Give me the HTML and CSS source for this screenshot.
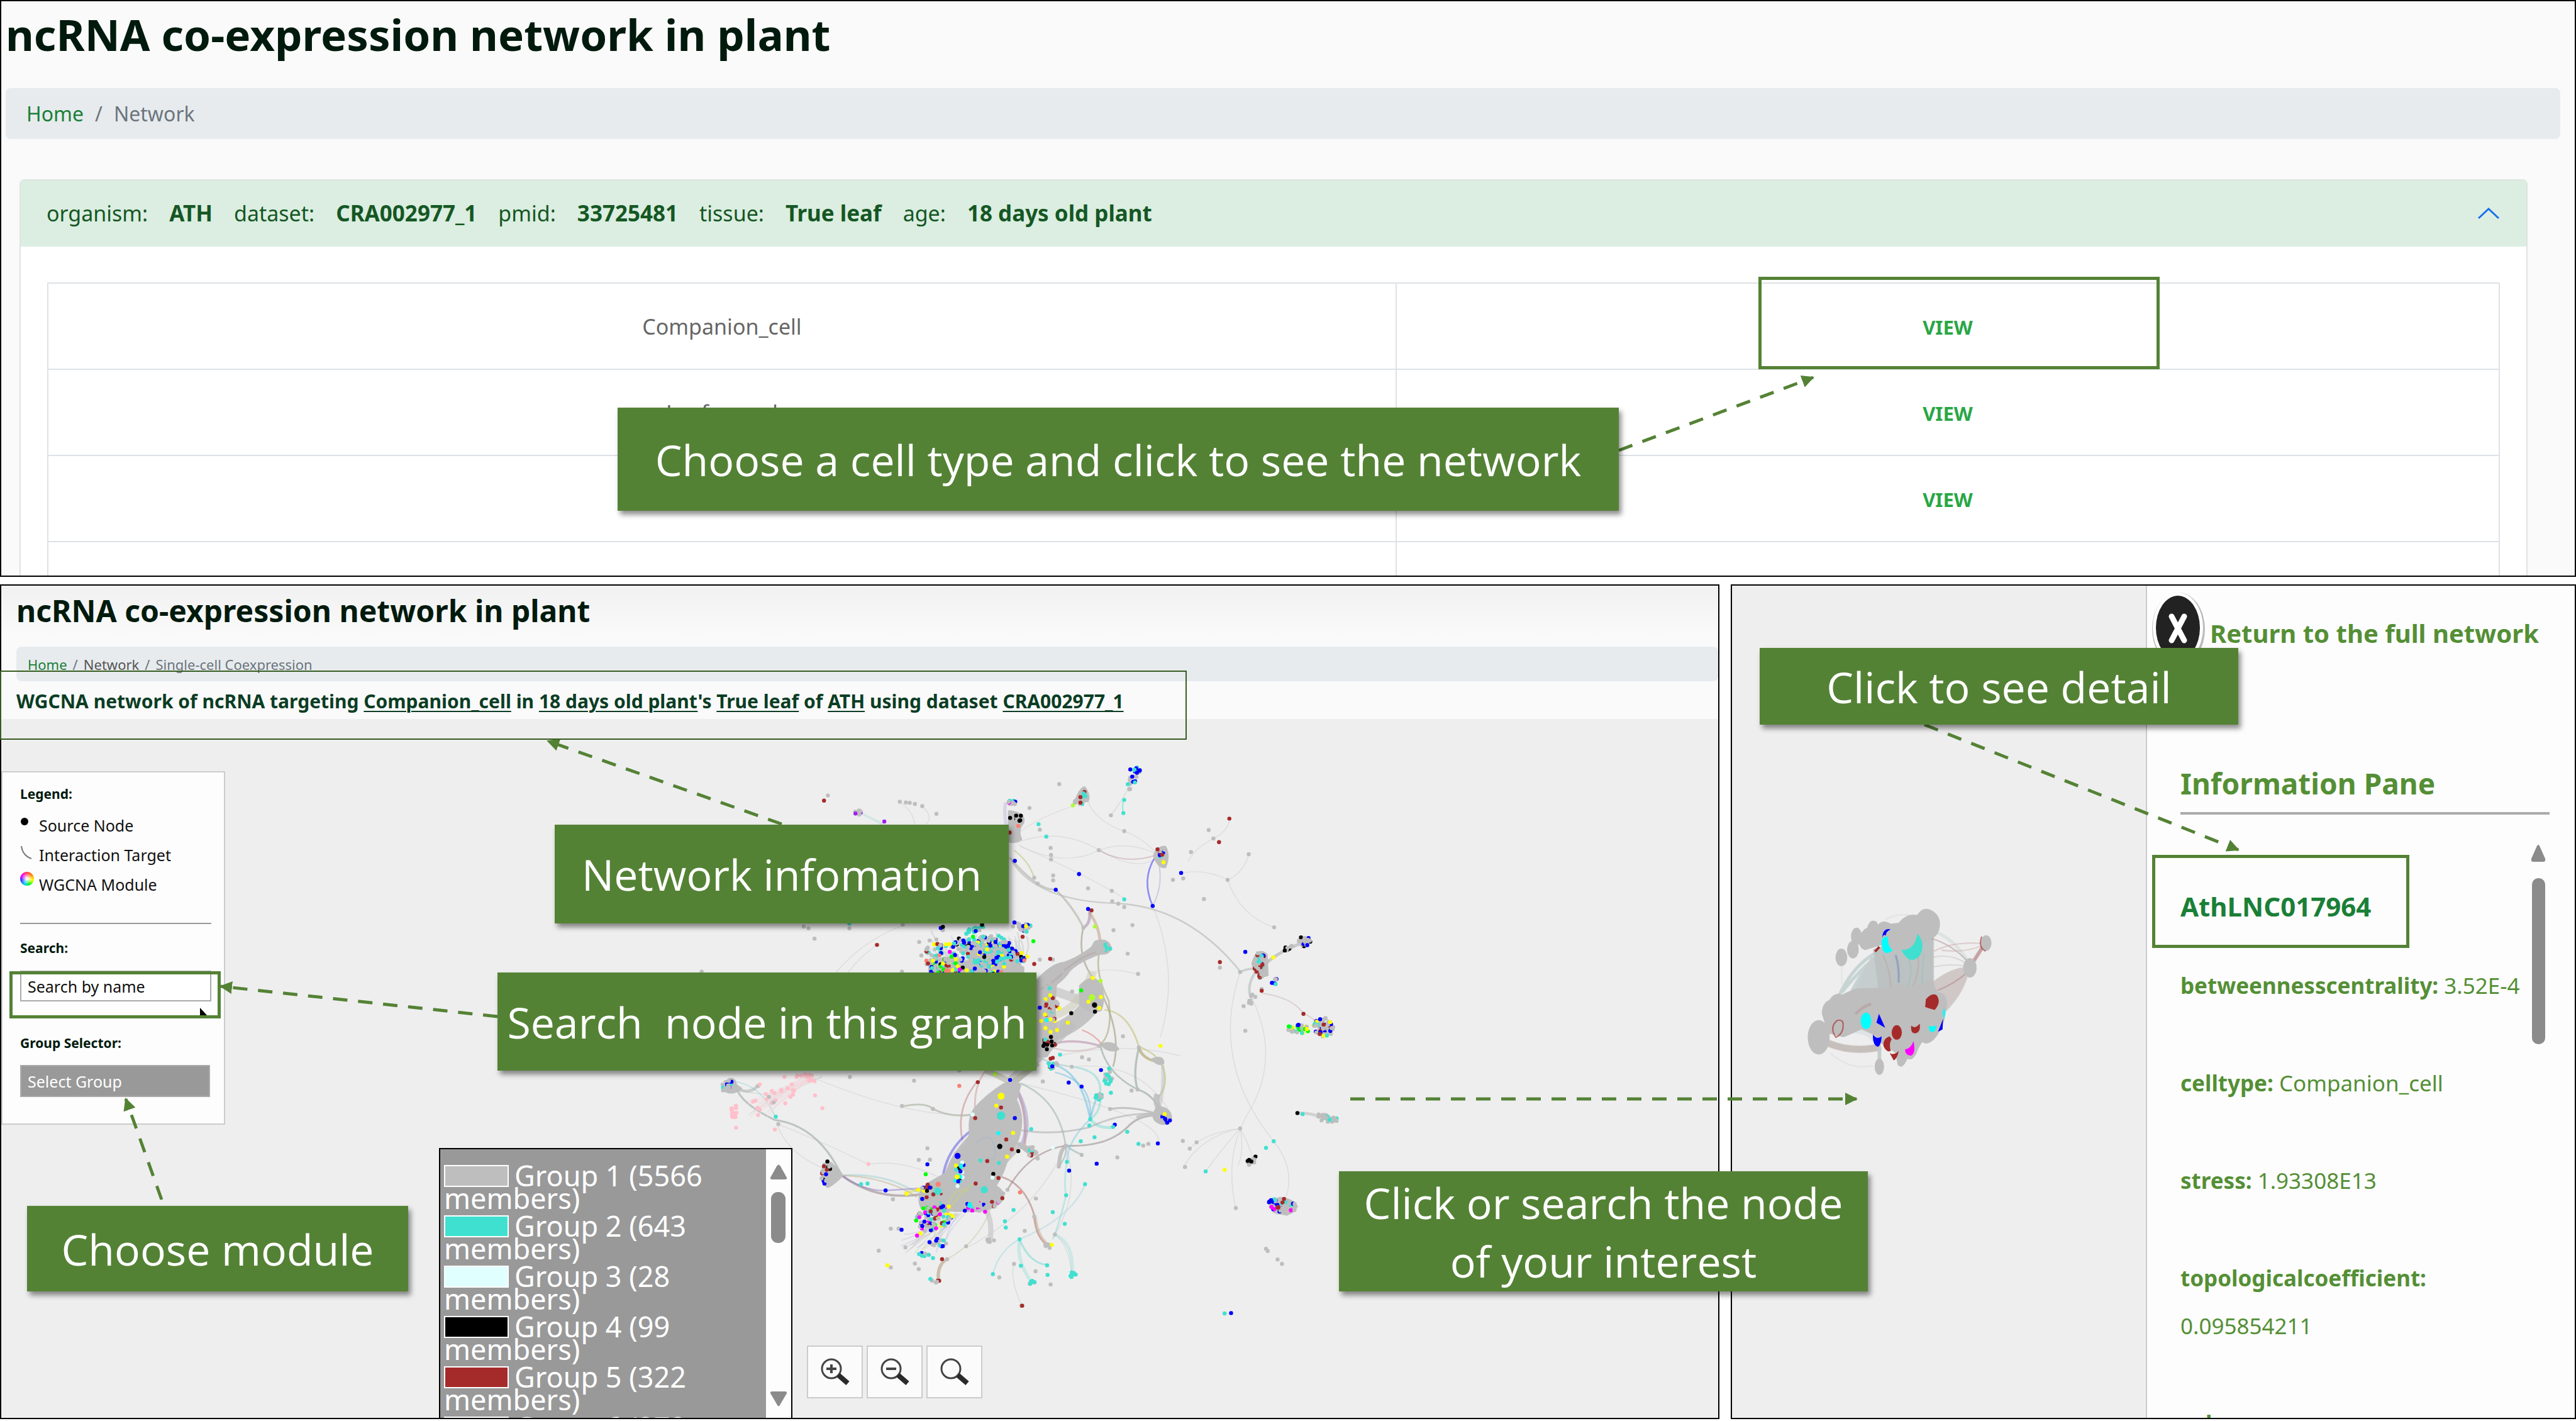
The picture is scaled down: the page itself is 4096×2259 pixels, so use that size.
FILE: index.html
```html
<!DOCTYPE html>
<html lang="en">
<head>
<meta charset="utf-8">
<title>ncRNA co-expression network in plant</title>
<link rel="stylesheet" href="styles.css">
</head>
<body>
<main class="guide">

  <section class="panel browse">
    <h1 class="browse-title">ncRNA co-expression network in plant</h1>
    <nav class="crumbs"><a href="#home">Home</a><span>/</span><span>Network</span></nav>
    <div class="accordion">
      <header class="accordion-head">
        <dl class="meta">
          <dt>organism:</dt><dd>ATH</dd>
          <dt>dataset:</dt><dd>CRA002977_1</dd>
          <dt>pmid:</dt><dd>33725481</dd>
          <dt>tissue:</dt><dd>True leaf</dd>
          <dt>age:</dt><dd>18 days old plant</dd>
        </dl>
        <button class="collapse" aria-label="Collapse"><svg width="36" height="20" viewBox="0 0 36 20"><path d="M2 18 18 3 34 18" fill="none" stroke="#1a6ff0" stroke-width="3"/></svg></button>
      </header>
      <table class="cells">
        <tbody>
          <tr><td>Companion_cell</td><td><a href="#view1">VIEW</a></td></tr>
          <tr><td>Leaf_guard</td><td><a href="#view2">VIEW</a></td></tr>
          <tr><td></td><td><a href="#view3">VIEW</a></td></tr>
          <tr><td></td><td></td></tr>
        </tbody>
      </table>
    </div>
  </section>

  <div class="details">
    <section class="panel network">
      <header class="network-head">
        <h2 class="network-title">ncRNA co-expression network in plant</h2>
        <nav class="crumbs crumbs-small"><a href="#home">Home</a><span>/</span><a class="plain" href="#network">Network</a><span>/</span><span>Single-cell Coexpression</span></nav>
        <p class="summary">WGCNA network of ncRNA targeting <u>Companion_cell</u> in <u>18 days old plant</u>'s <u>True leaf</u> of <u>ATH</u> using dataset <u>CRA002977_1</u></p>
      </header>
      <div class="canvas">
        <svg class="graph" id="graph" viewBox="0 0 1568 1568" preserveAspectRatio="none"></svg>

        <form class="sidebar">
          <h3>Legend:</h3>
          <ul class="legend">
            <li><svg width="26" height="30" viewBox="0 0 26 30"><circle cx="7" cy="8" r="6"/></svg>Source Node</li>
            <li><svg width="26" height="30" viewBox="0 0 26 30"><path d="M2 0Q4 15 18 20" fill="none" stroke="#777" stroke-width="2"/></svg>Interaction Target</li>
            <li><span class="wheel"></span>WGCNA Module</li>
          </ul>
          <hr>
          <label for="search">Search:</label>
          <input id="search" class="search" type="text" value="Search by name">
          <label class="group-label" for="group">Group Selector:</label>
          <select id="group" class="group"><option>Select Group</option></select>
        </form>

        <div class="dropdown">
          <ul class="groups">
            <li><span class="swatch silver"></span>Group 1 (5566 members)</li>
            <li><span class="swatch turquoise"></span>Group 2 (643 members)</li>
            <li><span class="swatch cyan"></span>Group 3 (28 members)</li>
            <li><span class="swatch black"></span>Group 4 (99 members)</li>
            <li><span class="swatch brown"></span>Group 5 (322 members)</li>
            <li><span class="swatch silver"></span>Group 6 (272 members)</li>
          </ul>
          <svg class="dropdown-bar" width="40" height="430" viewBox="0 0 40 430"><path d="M17 27 Q20 22 23 27 L33 45 Q34 48 30 48 H10 Q6 48 7 45Z"/><rect x="8" y="68" width="23" height="81" rx="11"/><path d="M17 405 Q20 412 23 405 L33 388 Q34 385 30 385 H10 Q6 385 7 388Z"/></svg>
        </div>

        <div class="zoom">
          <button aria-label="Zoom in"><svg width="48" height="44" viewBox="0 0 48 44"><circle cx="18" cy="17" r="15"/><path class="mark" d="M10 17H26M18 10V24"/><path class="handle" d="M29 27 44 40"/></svg></button>
          <button aria-label="Zoom out"><svg width="48" height="44" viewBox="0 0 48 44"><circle cx="18" cy="17" r="15"/><path class="mark" d="M10 17H26"/><path class="handle" d="M29 27 44 40"/></svg></button>
          <button aria-label="Fit"><svg width="48" height="44" viewBox="0 0 48 44"><circle cx="18" cy="17" r="15"/><path class="handle" d="M29 27 44 40"/></svg></button>
        </div>
      </div>
    </section>

    <section class="panel node">
      <div class="stage">
        <svg class="module" viewBox="0 0 1080 960">
          <defs><filter id="soft"><feGaussianBlur stdDeviation="2"/></filter></defs>
          <g fill="none" filter="url(#soft)">
            <path d="M400 280Q280 350 210 510M430 280Q330 360 270 500M470 250Q350 330 230 480" stroke="#b4c8c6" stroke-width="16" opacity=".7"/>
            <path d="M380 300Q330 380 290 480L480 500V300Z" fill="#c6cecd"/>
            <path d="M390 260 L420 490 H700 V190 L480 230Z" fill="#bcc2c1"/>
            <path d="M505 290Q525 350 520 430" stroke="#7f92c0" stroke-width="10" opacity=".7"/>
            <path d="M440 290Q480 370 480 460M620 290Q630 370 590 460" stroke="#b8a09c" stroke-width="6" opacity=".5"/>
            <path d="M570 300Q600 380 560 470M650 280Q640 380 640 440" stroke="#8fc0bc" stroke-width="5" opacity=".6"/>
            <path d="M700 170Q800 200 880 330" stroke="#cfdcdb" stroke-width="16" opacity=".6"/>
            <path d="M690 205Q800 240 870 320" stroke="#a88f94" stroke-width="6" opacity=".6"/>
            <path d="M700 300Q790 280 880 340M700 350Q790 330 880 350" stroke="#bcb6b2" stroke-width="5" opacity=".5"/>
            <path d="M700 270Q800 220 940 230M740 265Q860 280 950 240" stroke="#c9a6a6" stroke-width="6" opacity=".55"/>
            <path d="M690 430Q790 350 880 350L870 410Q840 500 760 580" fill="#c4bbb8" opacity=".75"/>
            <path d="M720 470Q800 440 870 380" stroke="#b07f80" stroke-width="6" opacity=".6"/>
            <path d="M885 350 965 225" stroke="#b98d8d" stroke-width="18" opacity=".8"/>
            <path d="M160 740Q280 790 430 760" stroke="#bdb3ae" stroke-width="36" opacity=".8"/>
            <path d="M230 690Q330 650 400 720" stroke="#dfe3e6" stroke-width="30"/>
            <path d="M422 760V860" stroke="#c3cbca" stroke-width="18"/>
            <path d="M170 790Q270 880 390 855M450 110Q520 70 600 90M230 300V440" stroke="#ddd" stroke-width="4"/>
          </g>
          <g fill="#bebebe">
            <ellipse cx="112" cy="710" rx="56" ry="88"/>
            <path d="M128 590Q128 535 165 520Q195 475 230 492L300 460 480 455Q520 420 560 455L640 440Q690 390 705 450L720 480Q765 480 768 540L755 620 725 690Q680 760 640 735L620 770Q600 835 565 820Q540 880 515 850L505 790 430 740 400 700 330 670 240 710 160 690Z"/>
            <ellipse cx="228" cy="302" rx="30" ry="45"/><ellipse cx="287" cy="262" rx="30" ry="45"/><ellipse cx="305" cy="195" rx="28" ry="45"/>
            <path d="M320 210Q330 160 360 150Q370 110 395 114Q410 115 415 135Q440 105 480 130L520 125Q560 75 615 85Q640 45 675 55Q730 75 732 130Q730 190 690 205L640 240 580 270 500 260 430 240 350 265Q310 250 320 210Z"/>
            <ellipse cx="885" cy="355" rx="34" ry="50"/><ellipse cx="968" cy="228" rx="27" ry="40"/><ellipse cx="422" cy="860" rx="24" ry="42"/>
          </g>
          <path d="M465 195Q425 195 435 250Q450 300 490 265Q465 250 465 195Z" fill="#0ff"/>
          <path d="M437 200Q440 150 480 158Q455 170 455 190Q445 180 437 200Z" fill="#00f"/>
          <path d="M617 180Q660 230 630 290Q580 350 533 262Q600 270 617 180Z" fill="#40e0d0"/>
          <path d="M400 272 422 248" stroke="#a52a2a" stroke-width="12"/>
          <g fill="#a52a2a"><path d="M660 515Q690 480 715 495Q740 530 705 570Q680 565 656 555Z"/><ellipse cx="511" cy="685" rx="26" ry="37"/><path d="M585 650Q605 670 628 640Q635 685 605 690Q580 690 585 650Z"/><path d="M475 705Q440 715 443 755Q460 790 480 780Q470 740 485 720ZM475 790Q495 805 522 780Q510 825 495 828Z"/></g>
          <path d="M945 195Q925 250 965 270M235 630Q245 690 200 710Q165 660 205 625Q230 615 238 640" fill="none" stroke="#a52a2a" stroke-width="7" opacity=".6"/>
          <path d="M300 590Q340 550 380 540" fill="none" stroke="#b08a88" stroke-width="14" opacity=".4"/>
          <g fill="#0ff"><ellipse cx="354" cy="626" rx="27" ry="42"/><path d="M675 650Q695 660 715 648Q710 685 690 684Q675 680 675 650ZM752 560Q765 580 752 615Q742 590 752 560Z"/></g>
          <g fill="#00f"><path d="M420 590 452 662 407 635ZM390 695Q410 725 434 705Q430 757 412 758Q385 745 390 695ZM748 615 745 670 722 682Z"/></g>
          <path d="M553 772Q580 770 597 730Q610 800 580 804Q553 800 553 772Z" fill="#f0f"/>
        </svg>
      </div>
      <aside class="pane">
        <a class="back" href="#full"><svg width="86" height="130" viewBox="0 0 86 130"><ellipse cx="44" cy="59" rx="42" ry="58" fill="#bbb"/><ellipse cx="43" cy="57" rx="40" ry="56" fill="#fff"/><ellipse cx="43" cy="57" rx="35" ry="51" fill="#222"/><path d="M33 39 53 77M53 39 33 77" stroke="#fff" stroke-width="9" stroke-linecap="round"/></svg>Return to the full network</a>
        <h2>Information Pane</h2>
        <hr>
        <div class="scroller">
          <div class="facts">
            <h3><a href="#AthLNC017964">AthLNC017964</a></h3>
            <p><b>betweennesscentrality:</b> 3.52E-4</p>
            <p><b>celltype:</b> Companion_cell</p>
            <p><b>stress:</b> 1.93308E13</p>
            <p><b>topologicalcoefficient:</b><br>0.095854211</p>
            <p><b>color:</b> gray</p>
          </div>
          <svg class="scrollbar" width="24" height="370" viewBox="0 0 24 370"><path d="M9 52Q12 44 15 52L23 70Q24 75 20 75H4Q0 75 1 70Z"/><rect x="2" y="101" width="21" height="264" rx="10"/></svg>
        </div>
      </aside>
    </section>
  </div>

  <svg class="arrows" viewBox="0 0 4096 2259">
    <defs><marker id="tip" viewBox="0 0 10 10" refX="9" refY="5" markerUnits="userSpaceOnUse" markerWidth="20" markerHeight="20" orient="auto"><path d="M0 0 10 5 0 10Z" fill="#548235"/></marker></defs>
    <g fill="none" stroke="#548235" stroke-width="5" stroke-dasharray="23 17" marker-end="url(#tip)">
      <path d="M2574 716 2883 600"/>
      <path d="M1243 1310 871 1178"/>
      <path d="M791 1616 351 1568"/>
      <path d="M257 1907 200 1747"/>
      <path d="M3060 1152 3559 1351"/>
      <path d="M2147 1747H2952"/>
    </g>
    <path d="M318 1602V1614H329Z"/>
  </svg>
  <div class="mark-box mark-view"></div>
  <div class="mark-box mark-summary"></div>
  <div class="mark-box mark-search"></div>
  <div class="mark-box mark-node"></div>
  <p class="callout c-cell">Choose a cell type and click to see the network</p>
  <p class="callout c-info">Network infomation</p>
  <p class="callout c-search">Search&nbsp; node in this graph</p>
  <p class="callout c-module">Choose module</p>
  <p class="callout c-node">Click or search the node<br>of your interest</p>
  <p class="callout c-detail">Click to see detail</p>
</main>
<script src="graph.js"></script>
</body>
</html>
```
FILE: styles.css
```css
* { box-sizing: border-box; }
body { margin: 0; background: #fff; font-family: "Noto Sans", sans-serif; color: #001a0d; }
h1, h2, h3, p, ul, dl, dd { margin: 0; padding: 0; }
ul { list-style: none; }
a { text-decoration: none; color: #1a7f37; }
hr { border: 0; margin: 0; }

.guide { position: relative; display: grid; grid-template-rows: 917fr 1327fr; gap: 12px; height: 100vh; padding-bottom: 3px; overflow: hidden; }
.panel { border: 2px solid #000; overflow: hidden; min-width: 0; min-height: 0; }

/* cell type list */
.browse { padding: 12px 23px 0 7px; background: #fafafa; }
.browse-title { font-size: 69px; line-height: 80px; }
.crumbs { display: flex; align-items: center; gap: 18px; height: 81px; margin-top: 46px; padding: 0 33px; border-radius: 8px; background: #e7ebee; color: #6c757d; font-size: 32px; }
.accordion { margin: 64px 52px 0 22px; border: 2px solid #dfe3e1; border-radius: 8px; background: #fff; }
.accordion-head { display: flex; align-items: center; justify-content: space-between; height: 105px; padding: 0 42px 2px 41px; background: #dbeee1; color: #155724; font-size: 34px; }
.meta { display: flex; align-items: baseline; gap: 34px; }
.meta dd { font-size: 35px; font-weight: 700; }
.collapse { border: 0; padding: 0; background: none; line-height: 0; }
.cells { width: calc(100% - 84px); margin: 57px 42px 0; border-collapse: collapse; table-layout: fixed; color: #666; font-size: 34px; text-align: center; }
.cells td { height: 137px; padding: 0; border: 2px solid #dee2e6; }
.cells td:first-child { width: 55%; }
.cells a { color: #28a745; font-weight: 700; font-size: 31px; }

/* lower row */
.details { display: grid; grid-template-columns: 2734fr 1344fr; gap: 18px; min-height: 0; }
.network { display: flex; flex-direction: column; }
.network-head { padding: 10px 0 0 24px; background: linear-gradient(#f1f1f1, #fafafa 80px); }
.network-title { font-size: 48px; line-height: 60px; }
.crumbs-small { gap: 9px; height: 55px; margin-top: 27px; padding: 0 18px; font-size: 22px; }
.plain { color: #555; }
.summary { padding-top: 4px; color: #0b3d24; font-size: 30px; font-weight: 700; line-height: 56px; white-space: nowrap; }
.summary u { text-decoration-thickness: 2px; text-underline-offset: 4px; }
.canvas { position: relative; flex: 1; padding-top: 83px; background: #eee; }
.graph { position: absolute; left: 1100px; top: 51px; width: 1074px; height: 915px; }

.sidebar { position: relative; width: 356px; padding: 19px 20px 42px 28px; border: 2px solid #ccc; background: #fdfdfd; }
.sidebar h3, .sidebar label { display: block; font-size: 21px; font-weight: 700; line-height: 30px; }
.legend { margin: 12px 0 37px; font-size: 25px; line-height: 47px; color: #111; }
.legend li { display: flex; align-items: center; gap: 4px; white-space: nowrap; }
.wheel { width: 22px; height: 22px; margin: 0 4px 20px 0; border-radius: 50%; background: radial-gradient(#fff 5%, transparent 60%), conic-gradient(#f44, #f80, #ff0, #0f0, #0cf, #33f, #f0f, #f44); }
.sidebar hr { height: 2px; margin-bottom: 23px; background: #999; }
.search { display: block; width: 304px; height: 49px; margin: 21px 0 51px; padding: 0 10px; border: 2px solid #aaa; background: #fff; color: #111; font: 25px "Noto Sans", sans-serif; }
.group { display: block; width: 302px; height: 51px; margin-top: 20px; padding: 0 10px; border: 2px solid #aaa; border-radius: 0; appearance: none; background: #999; color: #fff; font: 25px "Noto Sans", sans-serif; }

.dropdown { position: absolute; left: 696px; top: 682px; display: flex; justify-content: space-between; width: 562px; height: 432px; border: 2px solid #000; background: #999; overflow: hidden; }
.groups { width: 450px; padding: 20px 6px 0; color: #fff; font-size: 45px; line-height: 35px; }
.groups li { height: 80px; padding-top: 4px; }
.swatch { display: inline-block; width: 103px; height: 35px; margin-right: 9px; border: 2px solid #fff; vertical-align: -1px; }
.silver { background: #bebebe; }
.turquoise { background: #40e0d0; }
.cyan { background: #e0ffff; }
.black { background: #000; }
.brown { background: #a52a2a; }
.dropdown-bar { background: #fdfdfd; fill: #8b8b8b; }

.zoom { position: absolute; left: 1281px; top: 996px; display: flex; gap: 6px; }
.zoom button { display: flex; align-items: center; justify-content: center; width: 89px; height: 84px; padding: 0; border: 2px solid #ccc; background: #fbfbfb; }
.zoom svg { fill: none; stroke: #444; stroke-width: 3; }
.zoom .mark { stroke-width: 4; }
.zoom .handle { stroke: #2a2a2a; stroke-width: 8; }

/* node information */
.node { display: grid; grid-template-columns: 658fr 682fr; }
.stage { position: relative; background: #eee; }
.module { position: absolute; left: 103px; top: 497px; width: 336px; height: 299px; }
.pane { padding: 0 40px 0 53px; border-left: 2px solid #ccc; background: #fdfdfd; color: #548f35; overflow: hidden; min-height: 0; }
.back { display: flex; align-items: center; gap: 8px; height: 150px; margin-left: -47px; color: #548f35; font-size: 40px; font-weight: 700; white-space: nowrap; }
.back svg { flex: none; }
.pane h2 { margin-top: 124px; font-size: 46px; line-height: 80px; white-space: nowrap; }
.pane hr { height: 4px; margin-top: 6px; background: #aaa; }
.scroller { display: flex; justify-content: space-between; padding-right: 6px; }
.facts { width: 545px; }
.facts h3 { margin-top: 106px; font-size: 42px; line-height: 80px; }
.facts p { margin: 48px 0 79px; font-size: 35px; line-height: 76px; white-space: nowrap; }
.facts p + p { margin-top: 0; }
.scrollbar { flex: none; fill: #8b8b8b; }

/* guide annotations */
.arrows { position: absolute; inset: 0; width: 100%; height: 100%; }
.mark-box { position: absolute; border: 5px solid #548235; }
.mark-view { left: 2796px; top: 440px; width: 638px; height: 147px; }
.mark-summary { left: 0; top: 1066px; width: 1887px; height: 110px; border: 2px solid #385d20; }
.mark-search { left: 15px; top: 1544px; width: 336px; height: 75px; }
.mark-node { left: 3422px; top: 1359px; width: 409px; height: 148px; }
.callout { position: absolute; display: flex; align-items: center; justify-content: center; background: #548235; box-shadow: 4px 6px 8px rgb(0 0 0 / .45); color: #fff; font-family: "Open Sans", sans-serif; font-size: 68px; line-height: 93px; text-align: center; white-space: nowrap; }
.c-cell { left: 982px; top: 648px; width: 1592px; height: 164px; }
.c-info { left: 882px; top: 1311px; width: 722px; height: 157px; }
.c-search { left: 791px; top: 1546px; width: 857px; height: 156px; }
.c-module { left: 43px; top: 1917px; width: 606px; height: 136px; }
.c-node { left: 2129px; top: 1862px; width: 841px; height: 191px; }
.c-detail { left: 2798px; top: 1030px; width: 761px; height: 122px; }
```
FILE: graph.js
```js
const svg = document.getElementById('graph');
const NS = 'http://www.w3.org/2000/svg';
const color = {
  g: '#bebebe', t: '#40e0d0', b: '#0000ff', r: '#a52a2a', y: '#ffff00',
  k: '#000000', n: '#00ff00', m: '#ff00ff', p: '#ffc0cb', c: '#00ffff',
  s: '#fa8072', l: '#adff2f', v: '#a020f0', w: '#e0ffff'
};

function add(tag, attrs) {
  const el = document.createElementNS(NS, tag);
  for (const k in attrs) el.setAttribute(k, attrs[k]);
  svg.appendChild(el);
}
function dot(x, y, c, size = 1) {
  add('ellipse', { cx: x, cy: y, rx: 4.7 * size, ry: 5.5 * size, fill: color[c] });
}
let seed = 7;
function rnd() {
  seed = (seed * 16807) % 2147483647;
  return seed / 2147483647;
}
function edge(d, stroke = '#bebebe', width = 3, opacity = 0.7) {
  add('path', { d, fill: 'none', stroke, 'stroke-width': width, 'stroke-opacity': opacity });
}
function blob(d) {
  add('path', { d, fill: '#bebebe', stroke: '#bebebe', 'stroke-width': 8, 'stroke-linejoin': 'round' });
}
// Scatter n dots in a rotated ellipse; each letter of the palette is equally likely.
function cluster(x, y, rx, ry, angle, n, palette) {
  const a = angle * Math.PI / 180;
  for (let i = 0; i < n; i++) {
    const t = rnd() * Math.PI * 2;
    const r = Math.sqrt(rnd());
    const px = Math.cos(t) * r * rx;
    const py = Math.sin(t) * r * ry;
    dot(x + px * Math.cos(a) - py * Math.sin(a), y + px * Math.sin(a) + py * Math.cos(a),
      palette[Math.floor(rnd() * palette.length)]);
  }
}

// faint long edges
const faint = [
  'M750 250Q850 205 943 270T1085 285', 'M755 255Q860 320 943 270Q1010 240 1085 285', 'M760 260Q900 330 1000 400',
  'M915 130Q930 190 1001 218Q1050 240 1080 285', 'M882 150Q780 190 740 240', 'M970 175Q1000 130 1020 80',
  'M427 528Q350 590 300 720', 'M487 475Q340 540 270 720', 'M1245 190Q1240 220 1208 238Q1160 270 1150 300',
  'M1133 332Q1190 320 1241 351Q1280 330 1290 280', 'M1241 351Q1270 450 1349 480', 'M1067 422Q1130 600 1085 780',
  'M1270 602Q1200 850 1348 1063Q1400 1140 1375 1220', 'M1300 680Q1360 830 1297 970Q1230 1090 1260 1245',
  'M1270 1028Q1290 1070 1300 1110', 'M1270 1028Q1280 1090 1265 1130', 'M1270 1028Q1230 1080 1190 1145',
  'M1270 1028Q1180 1050 1140 1130', 'M1270 1028Q1190 1040 1155 1080', 'M865 1075Q900 1200 840 1317',
  'M760 905Q1100 1000 1080 1070', 'M745 1397Q735 1440 763 1510', 'M840 1317Q870 1340 880 1425',
  'M195 1015Q330 1080 405 1125', 'M195 1015Q220 1110 345 1155', 'M100 920Q190 960 300 885', 'M270 885Q500 1000 650 990',
  'M130 990Q230 900 300 890', 'M410 1125Q500 1110 600 1180', 'M865 1075Q800 1250 640 1350', 'M1030 607Q980 590 930 600',
  'M880 860Q1040 840 1110 990', 'M850 830Q1000 790 1130 830', 'M480 140Q510 160 515 200', 'M532 150Q560 180 540 200'
];
faint.forEach(d => edge(d, '#d3d3d3', 2, 0.7));

edge('M1072 290Q1040 350 1067 422', '#0000ff', 4, 0.4);
edge('M1078 290Q1095 360 1067 422', '#8080c0', 3, 0.3);
edge('M735 290Q800 380 842 378Q880 420 906 480', '#b0b0a8', 5, 0.6);
edge('M740 300Q800 410 985 415Q1150 425 1270 600', '#b0b8b0', 4, 0.6);
edge('M745 270Q780 300 792 345', '#a8c060', 3, 0.5);
edge('M943 270Q1000 310 1070 285', '#b08090', 3, 0.4);
edge('M725 140Q720 190 735 230', '#9f9fd0', 8, 0.3);
edge('M380 165Q420 185 440 200', '#9fd6d6', 6, 0.35);
edge('M1000 130Q995 150 999 170', '#40e0d0', 3, 0.5);
edge('M906 480Q890 560 930 620Q1000 760 975 860', '#a09a80', 4, 0.6);
edge('M945 540Q930 600 965 680Q975 770 945 800', '#a8a880', 4, 0.6);
edge('M905 482Q925 470 920 430', '#9f80a0', 7, 0.5);
edge('M920 440Q945 480 945 530', '#c09a80', 7, 0.5);
edge('M955 705Q1010 710 1035 805Q1090 830 1095 880Q1100 920 1078 945', '#b8b860', 4, 0.5);
edge('M1035 805Q1040 840 1085 848', '#a8a060', 7, 0.6);
edge('M1090 855Q1095 920 1080 980', '#bebebe', 8, 0.5);
edge('M1035 808Q1020 880 1032 922Q1070 935 1090 990', '#a0b0a8', 5, 0.7);
edge('M945 800Q960 880 1032 922', '#a0b0a8', 4, 0.7);
edge('M830 800Q880 780 945 803', '#b080a0', 6, 0.5);
edge('M903 760Q930 770 950 800', '#e05050', 4, 0.4);
edge('M830 805Q880 830 950 803', '#c0a0a0', 4, 0.4);
edge('M880 860Q820 850 800 830', '#a0c8c8', 4, 0.6);
edge('M820 850Q900 860 922 1003Q935 940 945 930', '#60c0e0', 5, 0.5);
edge('M880 860Q950 870 945 930Q950 980 922 1003', '#80d8d0', 5, 0.5);
edge('M922 1003Q940 1030 975 1025', '#60d8d0', 8, 0.4);
edge('M840 875Q930 900 922 1003', '#50b0e0', 4, 0.4);
edge('M760 905Q850 950 865 1075Q870 1100 850 1130', '#a0b8b0', 4, 0.6);
edge('M750 1030Q830 1050 920 1025Q1000 980 1090 990', '#b0b0b0', 5, 0.6);
edge('M865 1075Q960 1080 1008 1025Q1040 985 1090 995', '#a8a0a0', 5, 0.7);
edge('M968 975Q1020 965 1080 990', '#b0b0b0', 5, 0.7);
edge('M865 1075Q850 1090 850 1130', '#b8b8b8', 9, 0.8);
edge('M865 1075Q890 1095 905 1100', '#b0c8c4', 5, 0.8);
edge('M865 1075Q780 1090 730 1195', '#a08888', 4, 0.6);
edge('M868 1118Q860 1180 866 1210Q850 1290 835 1330', '#90dcd8', 4, 0.5);
edge('M910 1180Q880 1270 758 1330', '#b0d8e0', 4, 0.5);
edge('M922 1003Q870 1060 868 1118', '#80c8e0', 4, 0.5);
edge('M758 1330Q750 1390 785 1445', '#90dcd8', 8, 0.4);
edge('M758 1330Q780 1395 822 1400', '#70d8d0', 5, 0.5);
edge('M758 1330Q710 1360 696 1425', '#90dcd8', 3, 0.5);
edge('M840 1317Q885 1340 880 1425', '#90dcd8', 8, 0.35);
edge('M700 1155Q770 1170 793 1268Q795 1330 828 1348', '#b08080', 4, 0.6);
edge('M793 1268Q800 1330 828 1348', '#c8a890', 9, 0.5);
edge('M680 1250Q695 1280 690 1330', '#c8c8c8', 12, 0.7);
edge('M590 1384Q565 1400 570 1445', '#b8a080', 8, 0.6);
edge('M690 1250Q660 1340 590 1384', '#c8c8a0', 3, 0.5);
edge('M660 900Q610 970 625 1060', '#c08080', 4, 0.5);
edge('M680 870Q650 910 655 990', '#c08080', 4, 0.4);
edge('M485 968Q540 955 557 975Q600 1000 650 990', '#b0b8a8', 5, 0.7);
edge('M345 1156Q430 1150 490 1185T560 1190', '#a0d0d0', 5, 0.5);
edge('M345 1156Q430 1230 540 1205', '#9a8a90', 6, 0.6);
edge('M345 1156Q400 1200 447 1197T540 1190', '#8a70c0', 4, 0.5);
edge('M345 1156Q450 1160 520 1215', '#c0b090', 4, 0.5);
edge('M490 1205Q530 1190 580 1190', '#d8d840', 8, 0.4);
edge('M100 915Q110 960 190 1005Q290 1020 345 1156', '#a8b0b0', 5, 0.7);
edge('M95 915Q130 940 150 912', '#b0b8b8', 8, 0.6);
edge('M95 900Q160 910 192 1000', '#80d0d0', 3, 0.4);
edge('M650 1030Q590 1080 580 1160', '#5050e0', 6, 0.5);
edge('M660 1030Q600 1090 585 1160', '#b0a0a0', 5, 0.6);
edge('M745 910Q790 1000 765 1070', '#9a90c8', 10, 0.5);
edge('M750 920Q775 970 770 1075', '#c09898', 6, 0.5);
edge('M765 1070Q720 1110 700 1160', '#bebebe', 16, 0.8);
edge('M805 640Q880 670 925 690', '#bebebe', 24, 0.6);
edge('M880 740Q830 800 740 900', '#bebebe', 28, 0.7);
edge('M930 680Q900 740 830 770', '#bebebe', 44, 0.9);
edge('M928 600Q900 700 840 720', '#c8c8b0', 20, 0.5);
edge('M1090 990Q1070 960 1078 935', '#bebebe', 14, 0.9);
edge('M1030 1000Q1060 985 1090 990', '#bebebe', 12, 0.8);
edge('M1270 602Q1290 590 1310 595Q1280 640 1298 680', '#b0bcb8', 6, 0.6);
edge('M1320 590Q1350 550 1420 520', '#bebebe', 8, 0.8);
edge('M1320 660Q1390 670 1417 715Q1440 725 1450 745', '#c8b0b0', 3, 0.5);
edge('M1403 986Q1440 985 1490 1010', '#bebebe', 8, 0.6);
edge('M680 870Q720 890 740 905Q770 880 800 850', '#b0b0a0', 16, 0.6);

// fans of bundled edges
for (let i = 0; i < 40; i++) {
  const x = 535 + rnd() * 240;
  edge(`M${x} ${490 + rnd() * 60}Q${x + 20} 560 ${660 + rnd() * 100} 610`, rnd() > 0.5 ? '#c8dce0' : '#c8c8c8', 4, 0.5);
}
for (let i = 0; i < 22; i++) {
  edge(`M345 1156Q330 ${1130 + rnd() * 50} ${300 + rnd() * 22} ${1120 + rnd() * 62}`, i % 2 ? '#9c9cd0' : '#bebebe', 5, 0.6);
  edge(`M${560 + rnd() * 80} 1260Q${540 + rnd() * 60} 1310 ${480 + rnd() * 110} ${1300 + rnd() * 70}`, i % 3 ? '#c4c4dc' : '#d4d4b8', 3, 0.45);
  edge(`M270 ${880 + rnd() * 20}Q${180 + rnd() * 60} 930 ${120 + rnd() * 60} ${950 + rnd() * 50}`, '#f0d8dc', 2, 0.6);
}

// dense cores
blob('M720 910Q745 895 758 910L748 950Q770 1000 752 1060L728 1110Q720 1150 700 1185Q725 1200 715 1225Q690 1255 640 1252L590 1250Q550 1275 530 1240Q520 1205 545 1180L590 1150Q605 1110 610 1095Q640 1070 645 1040Q640 1000 655 975Q680 940 720 910Z');
blob('M800 640Q820 600 850 620L840 640Q835 740 845 780L820 830 800 830Z');
blob('M900 640Q925 610 940 630Q958 665 945 705Q920 715 900 690Z');
blob('M935 520Q960 510 968 535Q965 555 940 550Q920 545 935 520Z');
blob('M800 625Q835 580 862 578Q905 560 938 525L950 548Q895 570 872 598Q850 640 800 655Z');
blob('M735 165Q770 170 765 195Q750 215 760 240Q745 250 735 245Z');
blob('M560 570Q600 560 625 590L760 590 745 540Q700 520 640 530Q660 580 625 575Q580 550 550 585V605H765V590Z');
blob('M1072 285Q1078 262 1095 262Q1105 285 1095 315Q1080 315 1072 285Z');
blob('M1080 970Q1108 975 1108 1000Q1100 1020 1083 1012Q1060 1000 1080 970Z');
blob('M890 140Q895 110 908 100Q920 120 915 135Z');
blob('M80 900Q95 885 98 910L110 920Q90 935 75 925Z');
blob('M345 1156Q320 1120 312 1120Q290 1150 312 1186Q320 1185 345 1156Z');
blob('M1300 580Q1310 535 1330 555L1332 610Q1310 620 1300 580Z');
blob('M1340 1225Q1380 1210 1400 1240Q1390 1270 1350 1255Z');
blob('M950 800Q975 790 985 812Q965 820 950 800Z');
blob('M1068 840Q1090 830 1090 850Q1080 855 1068 840Z');
blob('M755 1070Q790 1085 798 1095Q790 1110 755 1070Z');
edge('M805 650Q850 620 862 598Q900 560 935 548', '#b8a8a8', 5, 0.6);
edge('M655 1070Q690 1030 700 1080T670 1100', '#a0b4d0', 3, 0.4);
edge('M600 1240Q630 1190 650 1180M590 1240Q610 1180 640 1200', '#c8d080', 5, 0.5);

// mixed clusters
cluster(650, 560, 122, 52, 0, 190, 'ggggggttttbbbnyykrs');
cluster(690, 545, 55, 45, 0, 90, 'ggggtttbbg');
cluster(575, 585, 40, 22, 0, 50, 'ggggbrtyn');
cluster(650, 488, 28, 7, -20, 20, 'ttgtb');
cluster(765, 480, 24, 12, 10, 22, 'ggggbyt');
cluster(560, 1270, 48, 35, -30, 100, 'gggggggggttbbrymn');
cluster(550, 1200, 28, 20, 0, 26, 'gggggbryt');
cluster(568, 1340, 20, 12, 0, 14, 'gbtb');
cluster(540, 1373, 16, 6, 10, 8, 'gbt');
cluster(660, 1240, 55, 14, -8, 36, 'gggggrtbmg');
cluster(615, 1150, 14, 34, 10, 22, 'tcgygbkw');
cluster(830, 690, 20, 60, 0, 34, 'ggggggrty');
cluster(826, 795, 16, 18, 0, 16, 'gktrn');
cluster(1022, 75, 10, 34, 22, 26, 'gggggtgb');
cluster(900, 128, 12, 24, 25, 22, 'gggggtr');
cluster(742, 140, 14, 6, 0, 10, 'gtbm');
cluster(750, 185, 14, 12, 0, 12, 'gggk');
cluster(384, 167, 9, 7, -30, 9, 'ggv');
cluster(1086, 275, 10, 14, 0, 12, 'bgrgt');
cluster(1098, 1000, 11, 18, 0, 16, 'gggbgbt');
cluster(308, 1150, 9, 36, 8, 26, 'ggbggbgrk');
cluster(82, 912, 14, 22, 20, 24, 'gggggbt');
cluster(1318, 580, 15, 40, 0, 46, 'ggggggrrbt');
cluster(1420, 518, 14, 14, 0, 22, 'gggggbk');
cluster(1384, 538, 14, 7, -20, 10, 'gggrk');
cluster(1465, 752, 26, 26, 0, 70, 'ggggggtbybr');
cluster(1405, 758, 26, 12, 0, 34, 'nggbyt');
cluster(1370, 1240, 30, 20, 10, 44, 'ggggggbtmr');
cluster(1345, 1228, 10, 8, 0, 8, 'bbt');
cluster(1470, 1000, 30, 9, 15, 26, 'gggggt');
cluster(1298, 1115, 20, 8, -45, 12, 'gbkg');
cluster(96, 982, 8, 18, 0, 16, 'p');
cluster(180, 950, 75, 28, -30, 20, 'p');
cluster(270, 890, 32, 10, 10, 14, 'p');
cluster(963, 890, 10, 18, 0, 14, 'tgt');
cluster(942, 940, 9, 10, 0, 10, 'tg');
cluster(1350, 628, 7, 9, 0, 8, 'bgt');
cluster(1298, 675, 7, 14, 20, 8, 'g');
cluster(840, 850, 22, 18, 0, 12, 'tgrb');
cluster(785, 1448, 9, 5, -10, 8, 'ptt');
cluster(880, 1426, 9, 7, -30, 9, 't');
cluster(824, 1348, 9, 6, 0, 6, 'gg');
cluster(691, 1333, 8, 6, 0, 6, 'g');
cluster(567, 1444, 9, 4, 0, 5, 'gr');
cluster(785, 1090, 14, 12, 0, 12, 'ggrt');
cluster(960, 535, 10, 14, 0, 8, 'ggt');

// single nodes, "x,y" pairs by colour
const nodes = {
  g: '850,90 313,121 480,138 494,140 503,141 515,144 532,150 565,171 781,155 805,214 830,264 831,283 831,295 836,339 836,352 792,345 800,361 942,270 1001,218 970,175 917,374 972,381 973,409 987,416 1001,425 1020,474 976,488 1009,552 1033,607 906,481 1197,215 1208,238 1156,275 1290,281 1241,351 1138,347 1114,351 1186,403 1349,480 1270,602 1282,762 525,520 549,516 580,488 565,513 257,478 268,483 282,511 363,483 487,473 20,601 485,601 805,568 835,568 858,600 880,655 998,777 1035,807 903,834 879,860 812,900 1032,922 1018,925 513,898 618,870 364,888 485,967 557,975 198,1016 176,942 187,957 151,912 544,1082 524,1114 550,1113 865,1075 902,1100 849,1132 800,1110 1057,1070 1045,1075 985,1107 1137,1062 1169,1066 1153,1083 1142,1133 1270,1028 1260,1245 1330,1356 1357,1385 1367,1397 1334,1362 431,1361 459,1301 477,1301 493,1352 515,1396 524,1411 634,1349 796,1219 840,1317 770,1307 745,1397 795,1417 830,1453 711,1434 762,1511 459,1407 464,1221 792,1268 730,1195 720,1205 968,975 943,803 919,840 555,1443 590,1384 1223,590 1320,648 1278,695',
  r: '304,135 1245,184 1221,248 427,528 765,506 829,566 792,580 1417,716 1223,575 661,902 655,1000 715,971 727,1058 740,1085 683,1117 709,1163 694,1228 718,1218 578,1384 820,690 764,1511 656,1178 1320,653 735,222 925,434',
  b: '1015,50 896,335 842,378 747,299 1133,332 1067,422 917,430 1282,547 747,1000 872,903 902,914 834,859 947,869 979,1018 1079,1069 937,1124 873,1143 447,1197 484,1304 544,1126 532,1220 532,1294 805,699 736,896 1249,1531 746,467 575,482 702,520 631,1252',
  t: '820,233 802,199 1001,404 1001,133 999,169 363,470 192,996 405,1178 390,1180 785,1030 932,1052 900,1063 1034,1070 1008,1037 868,1119 910,1180 866,1210 835,1256 863,1288 744,1250 724,1281 726,1298 758,1330 761,1402 822,1401 823,1427 696,1425 551,1438 557,1381 1348,1063 1330,1081 1190,1145 1234,1532 1415,989 922,1003 970,931 966,865 852,827 710,1122 667,1115 975,1024 920,1020',
  y: '1085,803 1234,1141 451,1401 833,1345 704,966 743,1040 729,1105 928,618 947,670 918,683 850,701 817,718 808,735 818,755 830,765 845,760 870,740 943,700 1347,562 1092,303 1095,989 603,1267 528,1314 682,540 596,526 773,477 496,1206 776,560',
  k: '1403,986 712,1077 697,1152 932,690 933,710 878,714 822,800 1296,1118 671,473 626,590 676,561 543,1198 736,182 761,176 580,479 755,1090',
  n: '540,1153 901,652 650,506 600,560 1383,750 790,518',
  m: '573,1262 520,1320 596,547 564,1300 678,1255 619,595',
  s: '618,912 759,1202 755,204 769,570 592,598',
  l: '946,626 882,148 933,478 701,880',
  p: '407,1125 300,973 190,1031 100,1026 283,938 212,888 155,908',
  v: '444,192 377,170',
  w: '649,990 835,1080 614,1185 695,1162',
  c: '709,1041 821,733 620,1160'
};
for (const c in nodes) {
  nodes[c].split(' ').forEach(pair => {
    const [x, y] = pair.split(',').map(Number);
    dot(x, y, c);
  });
}
// hubs
[[715, 940, 'y', 1.7], [715, 993, 't', 2.1], [568, 1199, 't', 1.8], [569, 1180, 's', 1.3], [926, 671, 'l', 1.6],
 [712, 1077, 'k', 1.3], [676, 1195, 't', 1.8], [614, 1103, 'b', 1.5], [613, 1160, 'y', 1.3], [642, 1238, 'c', 1.2],
 [590, 600, 's', 1.6], [1358, 1243, 'r', 1.2], [932, 692, 'k', 1.3]].forEach(h => dot(...h));
```
